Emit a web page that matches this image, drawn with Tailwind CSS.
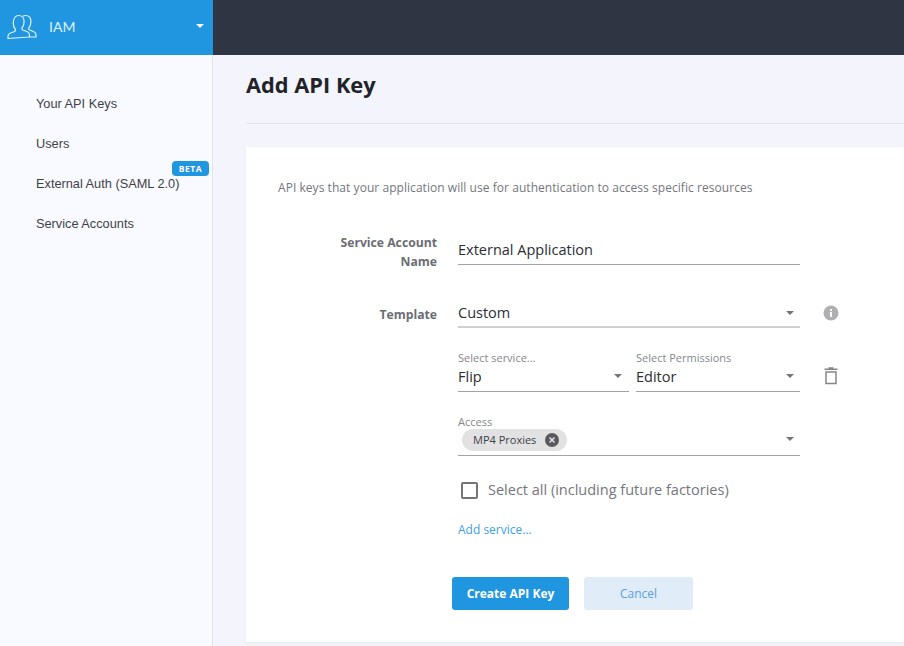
<!DOCTYPE html>
<html lang="en">
    <head>
        <meta charset="UTF-8" />
        <script src="https://cdn.jsdelivr.net/npm/@tailwindcss/browser@4"></script>
        <title>Add API Key</title>
    </head>
    <body class="w-[904px] h-[646px] overflow-hidden bg-[#f3f4fc] font-['Open_Sans',sans-serif] text-[#2b2d33]">
        <!-- Top bar -->
        <header class="flex h-[55px] bg-[#2f3542]">
            <div class="flex items-center w-[213px] h-full bg-[#2196e0] text-white">
                <svg class="ml-[7px] w-[30px] h-[26px] mb-[1px]" viewBox="0 0 30 26" fill="none" stroke="#e3f2fc" stroke-width="1.2" stroke-linejoin="round">
                    <path d="M1 24.5v-2.6c0-1.4 1-2.3 2.6-2.9l4-1.5c.9-.4 1.1-1.2.7-2-1.3-1.6-2-3.6-2-6.200C6.300 4.300 8.300 1.500 11.700 1.500s5.400 2.800 5.400 6.300c0 2.600-.7 4.600-2 6.200-.4.800-.2 1.600.7 2l4 1.500c1.600.6 2.600 1.500 2.600 2.900v2.600z" />
                    <path d="M15.800 2.300c.9-.6 1.900-.8 2.900-.8 3.400 0 5.200 2.800 5.200 6.300 0 2.600-.7 4.600-2 6.200-.4.800-.2 1.600.7 2l3.800 1.500c1.600.6 2.600 1.500 2.600 2.900v2.600h-6.500" />
                </svg>
                <span class="ml-[12px] mb-[2px] text-[14px] text-[#dff0fb] font-['Lato',sans-serif]">IAM</span>
                <span class="ml-auto mr-[9px] mb-[4px] w-0 h-0 border-x-[4px] border-x-transparent border-t-[4px] border-t-white"></span>
            </div>
        </header>

        <div class="flex h-[591px]">
            <!-- Sidebar -->
            <nav class="relative w-[213px] shrink-0 bg-[#f9faff] border-r border-[#e1e2ea] pt-[29px] pl-[36px] font-['Liberation_Sans',sans-serif] text-[12.75px] text-[#3d3f45]">
                <ul class="flex flex-col">
                    <li class="h-[40px] leading-[40px]">Your API Keys</li>
                    <li class="h-[40px] leading-[40px]">Users</li>
                    <li class="h-[40px] leading-[40px]">External Auth (SAML 2.0)</li>
                    <li class="h-[40px] leading-[40px]">Service Accounts</li>
                </ul>
                <span class="absolute left-[172px] top-[106px] w-[37px] h-[15px] rounded-[4px] bg-[#2196e0] text-white text-[8.5px] font-bold tracking-[0.5px] leading-[15px] text-center font-['Open_Sans',sans-serif]">BETA</span>
            </nav>

            <!-- Main -->
            <main class="flex-1 pl-[33px]">
                <h1 class="pt-[15px] h-[69px] border-b border-[#e1e2e8] text-[21.8px] leading-[30px] font-bold text-[#212329]">Add API Key</h1>

                <section class="mt-[23px] h-[495px] bg-white pl-[32px] pt-[33px] shadow-[0_1px_3px_rgba(0,0,0,0.06)]">
                    <p class="text-[12px] leading-[16px] tracking-[0.05px] text-[#74767c]">API keys that your application will use for authentication to access specific resources</p>

                    <div class="flex mt-[37px]">
                        <label class="w-[159px] text-right text-[12.2px] leading-[19px] font-bold text-[#6b6d73]">Service Account<br />Name</label>
                        <div class="ml-[21px] w-[342px] h-[32px] border-b border-[#a2a3a8] pt-[7px] text-[14.500px] leading-[20px]">External Application</div>
                    </div>

                    <div class="flex mt-[21px]">
                        <label class="w-[159px] pt-[13px] text-right text-[12.2px] leading-[19px] font-bold text-[#6b6d73]">Template</label>
                        <div class="relative ml-[21px] w-[342px] h-[36px] border-b-2 border-[#cfcfd2] pt-[11px] text-[14.500px] leading-[20px]">
                            Custom
                            <span class="absolute right-[6px] top-[19px] w-0 h-0 border-x-[4.500px] border-x-transparent border-t-[4.500px] border-t-[#757575]"></span>
                            <svg class="absolute left-[365px] top-[13px] w-[16px] h-[16px]" viewBox="0 0 16 16">
                                <circle cx="8" cy="8" r="7.500" fill="#b0b0b3" />
                                <rect x="7" y="7" width="2" height="5" fill="#fff" />
                                <rect x="7" y="4" width="2" height="2" fill="#fff" />
                            </svg>
                        </div>
                    </div>

                    <div class="flex ml-[180px] mt-[22px]">
                        <div class="relative w-[171px] h-[42px] border-b border-[#a2a3a8] pt-[1px]">
                            <div class="text-[11px] leading-[14px] text-[#85878c]">Select service...</div>
                            <div class="pt-[2px] text-[14.500px] leading-[20px]">Flip</div>
                            <span class="absolute right-[7px] top-[24px] w-0 h-0 border-x-[4.500px] border-x-transparent border-t-[4.500px] border-t-[#757575]"></span>
                        </div>
                        <div class="relative ml-[7px] w-[164px] h-[42px] border-b border-[#a2a3a8] pt-[1px]">
                            <div class="text-[11px] leading-[14px] text-[#85878c]">Select Permissions</div>
                            <div class="pt-[2px] text-[14.500px] leading-[20px]">Editor</div>
                            <span class="absolute right-[6px] top-[24px] w-0 h-0 border-x-[4.500px] border-x-transparent border-t-[4.500px] border-t-[#757575]"></span>
                            <svg class="absolute left-[188px] top-[17px] w-[14px] h-[18px]" viewBox="0 0 14 18" fill="none" stroke="#85868a" stroke-width="1.500">
                                <path d="M2 5h10v11.500H2z" />
                                <path d="M0.500 2.200h13M4.500 1h5" />
                            </svg>
                        </div>
                    </div>

                    <div class="relative ml-[180px] mt-[22px] w-[342px] h-[42px] border-b border-[#a2a3a8] pt-[1px]">
                        <div class="text-[11px] leading-[14px] text-[#85878c]">Access</div>
                        <div class="flex items-center ml-[4px] w-[105px] h-[22px] rounded-full bg-[#e2e2e3] pl-[11px] text-[11px] text-[#3d3f45]">
                            MP4 Proxies
                            <svg class="ml-[9px] w-[14px] h-[14px]" viewBox="0 0 14 14">
                                <circle cx="7" cy="7" r="7" fill="#58595d" />
                                <path d="M4.500 4.500l5 5M9.500 4.500l-5 5" stroke="#e2e2e3" stroke-width="1.500" />
                            </svg>
                        </div>
                        <span class="absolute right-[6px] top-[23px] w-0 h-0 border-x-[4.500px] border-x-transparent border-t-[4.500px] border-t-[#757575]"></span>
                    </div>

                    <div class="flex items-center ml-[183px] mt-[24px] h-[20px]">
                        <span class="w-[17px] h-[17px] rounded-[2px] border-2 border-[#757575]"></span>
                        <span class="ml-[10px] text-[14.500px] text-[#74767c]">Select all (including future factories)</span>
                    </div>

                    <a class="block ml-[180px] mt-[21px] text-[12px] leading-[18px] text-[#3ea0e4]">Add service...</a>

                    <div class="flex ml-[174px] mt-[38px]">
                        <button class="w-[117px] h-[33px] rounded-[3px] bg-[#2196e0] text-white text-[12px] font-bold">Create API Key</button>
                        <button class="ml-[15px] w-[109px] h-[33px] rounded-[3px] bg-[#e0ecf8] text-[#5b9fdc] text-[12px]">Cancel</button>
                    </div>
                </section>
            </main>
        </div>
    </body>
</html>
